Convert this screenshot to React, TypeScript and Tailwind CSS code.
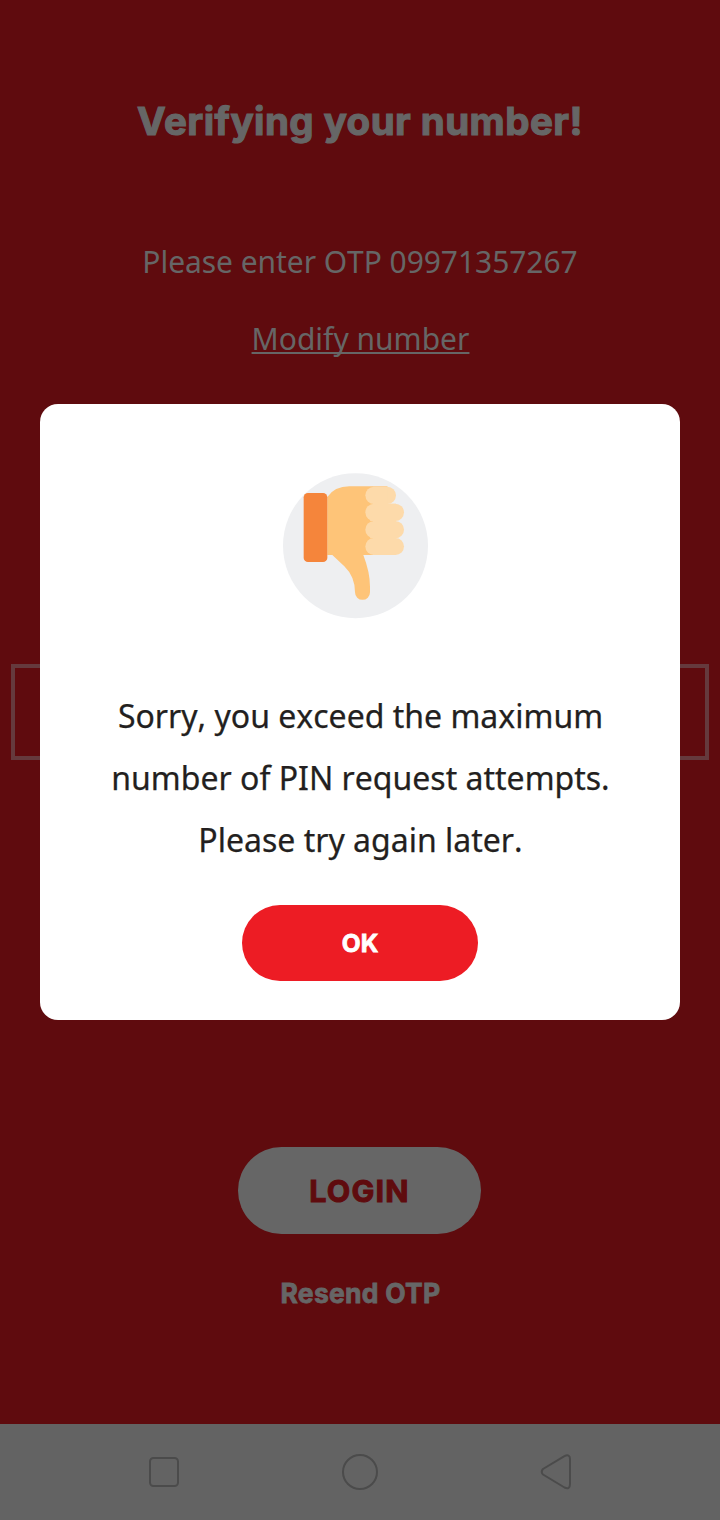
function ThumbDown() {
  return (
    <svg className="block h-[170px] w-[170px]" viewBox="0 0 510 510" aria-hidden="true">
      <circle cx="256.500" cy="257" r="217.500" fill="#eeeff1" />
      <path
        d="M172 111 Q194 79 238 79 H352 V285 H280 Q300 337 300 380 V397 A22.500 22.500 0 0 1 255 397 Q255 350 223 319 L187 285 H172 Z"
        fill="#fec478"
      />
      <g fill="#fddaaa">
        <rect x="286" y="80" width="92" height="52" rx="26" />
        <rect x="286" y="131" width="116" height="52" rx="26" />
        <rect x="286" y="183" width="116" height="52" rx="26" />
        <rect x="286" y="234" width="116" height="51" rx="25.5" />
        <path d="M309 80 H353 V131 H378 V285 H309 V234 H300 L309 208 V183 H300 L309 157 Z" />
      </g>
      <rect x="101" y="99" width="71" height="207" rx="13" fill="#f5853b" />
    </svg>
  );
}

function NavBar() {
  return (
    <nav className="h-24 bg-[#636363]">
      <svg className="block h-24 w-[720px]" viewBox="0 0 720 96" fill="none" stroke="#4b4b4b" strokeWidth="2">
        <rect x="150" y="34" width="28" height="28" rx="3.5" />
        <circle cx="360" cy="48" r="17" />
        <path
          d="M543 45 L564 32.300 Q570 29.500 570 35 V60 Q570 66 564.500 63.500 L543 50.500 Q540.500 48 543 45 Z"
          strokeLinejoin="round"
        />
      </svg>
    </nav>
  );
}

export default function App() {
  return (
    <div className="relative flex h-[1520px] w-[720px] flex-col overflow-hidden bg-[#5f0b0e] font-['Noto_Sans',sans-serif] text-[#666666]">
      <main className="flex flex-1 flex-col items-center">
        <h1 className="mt-[96px] h-[50px] whitespace-nowrap font-['Inter',sans-serif] text-[38.5px] leading-[50px] font-bold tracking-[0.45px] [-webkit-text-stroke:1.2px_#666666]">
          Verifying your number!
        </h1>
        <p className="mt-[96px] h-10 whitespace-nowrap text-[30px] leading-10 tracking-[-0.06px] [font-kerning:none]">
          Please enter OTP 09971357267
        </p>
        <a className="mt-[37px] ml-px h-10 whitespace-nowrap text-[30px] leading-10 underline decoration-2 underline-offset-[2px] [text-decoration-skip-ink:none]">
          Modify number
        </a>
        <div className="mt-[305px] h-24 w-[698px] border-4 border-[#653a3d]" />
        <button className="mt-[387px] mr-px h-[87px] w-[243px] rounded-full bg-[#666666] font-['Inter',sans-serif] text-[30.5px] leading-[87px] font-bold tracking-[1.2px] text-[#5f0b0e] [-webkit-text-stroke:1px_#5f0b0e]">
          LOGIN
        </button>
        <button className="mt-[39px] ml-px h-10 whitespace-nowrap font-['Inter',sans-serif] text-[26.5px] leading-10 font-bold tracking-[0.25px] [-webkit-text-stroke:0.8px_#666666]">
          Resend OTP
        </button>
      </main>
      <NavBar />
      <section
        role="dialog"
        className="absolute top-[404px] left-10 flex h-[616px] w-[640px] flex-col items-center rounded-[18px] bg-white pt-14"
      >
        <div className="mr-[10px]">
          <ThumbDown />
        </div>
        <p className="mt-[55px] ml-px text-center text-[32px] leading-[62px] whitespace-nowrap text-[#231f20] [font-kerning:none] [-webkit-text-stroke:0.25px_#231f20]">
          Sorry, you exceed the maximum
          <br />
          number of PIN request attempts.
          <br />
          Please try again later.
        </p>
        <button className="mt-[34px] h-[76px] w-[236px] rounded-full bg-[#ed1c24] font-['Inter',sans-serif] text-[24.5px] leading-[77px] font-bold text-white [-webkit-text-stroke:0.8px_#ffffff]">
          OK
        </button>
      </section>
    </div>
  );
}
